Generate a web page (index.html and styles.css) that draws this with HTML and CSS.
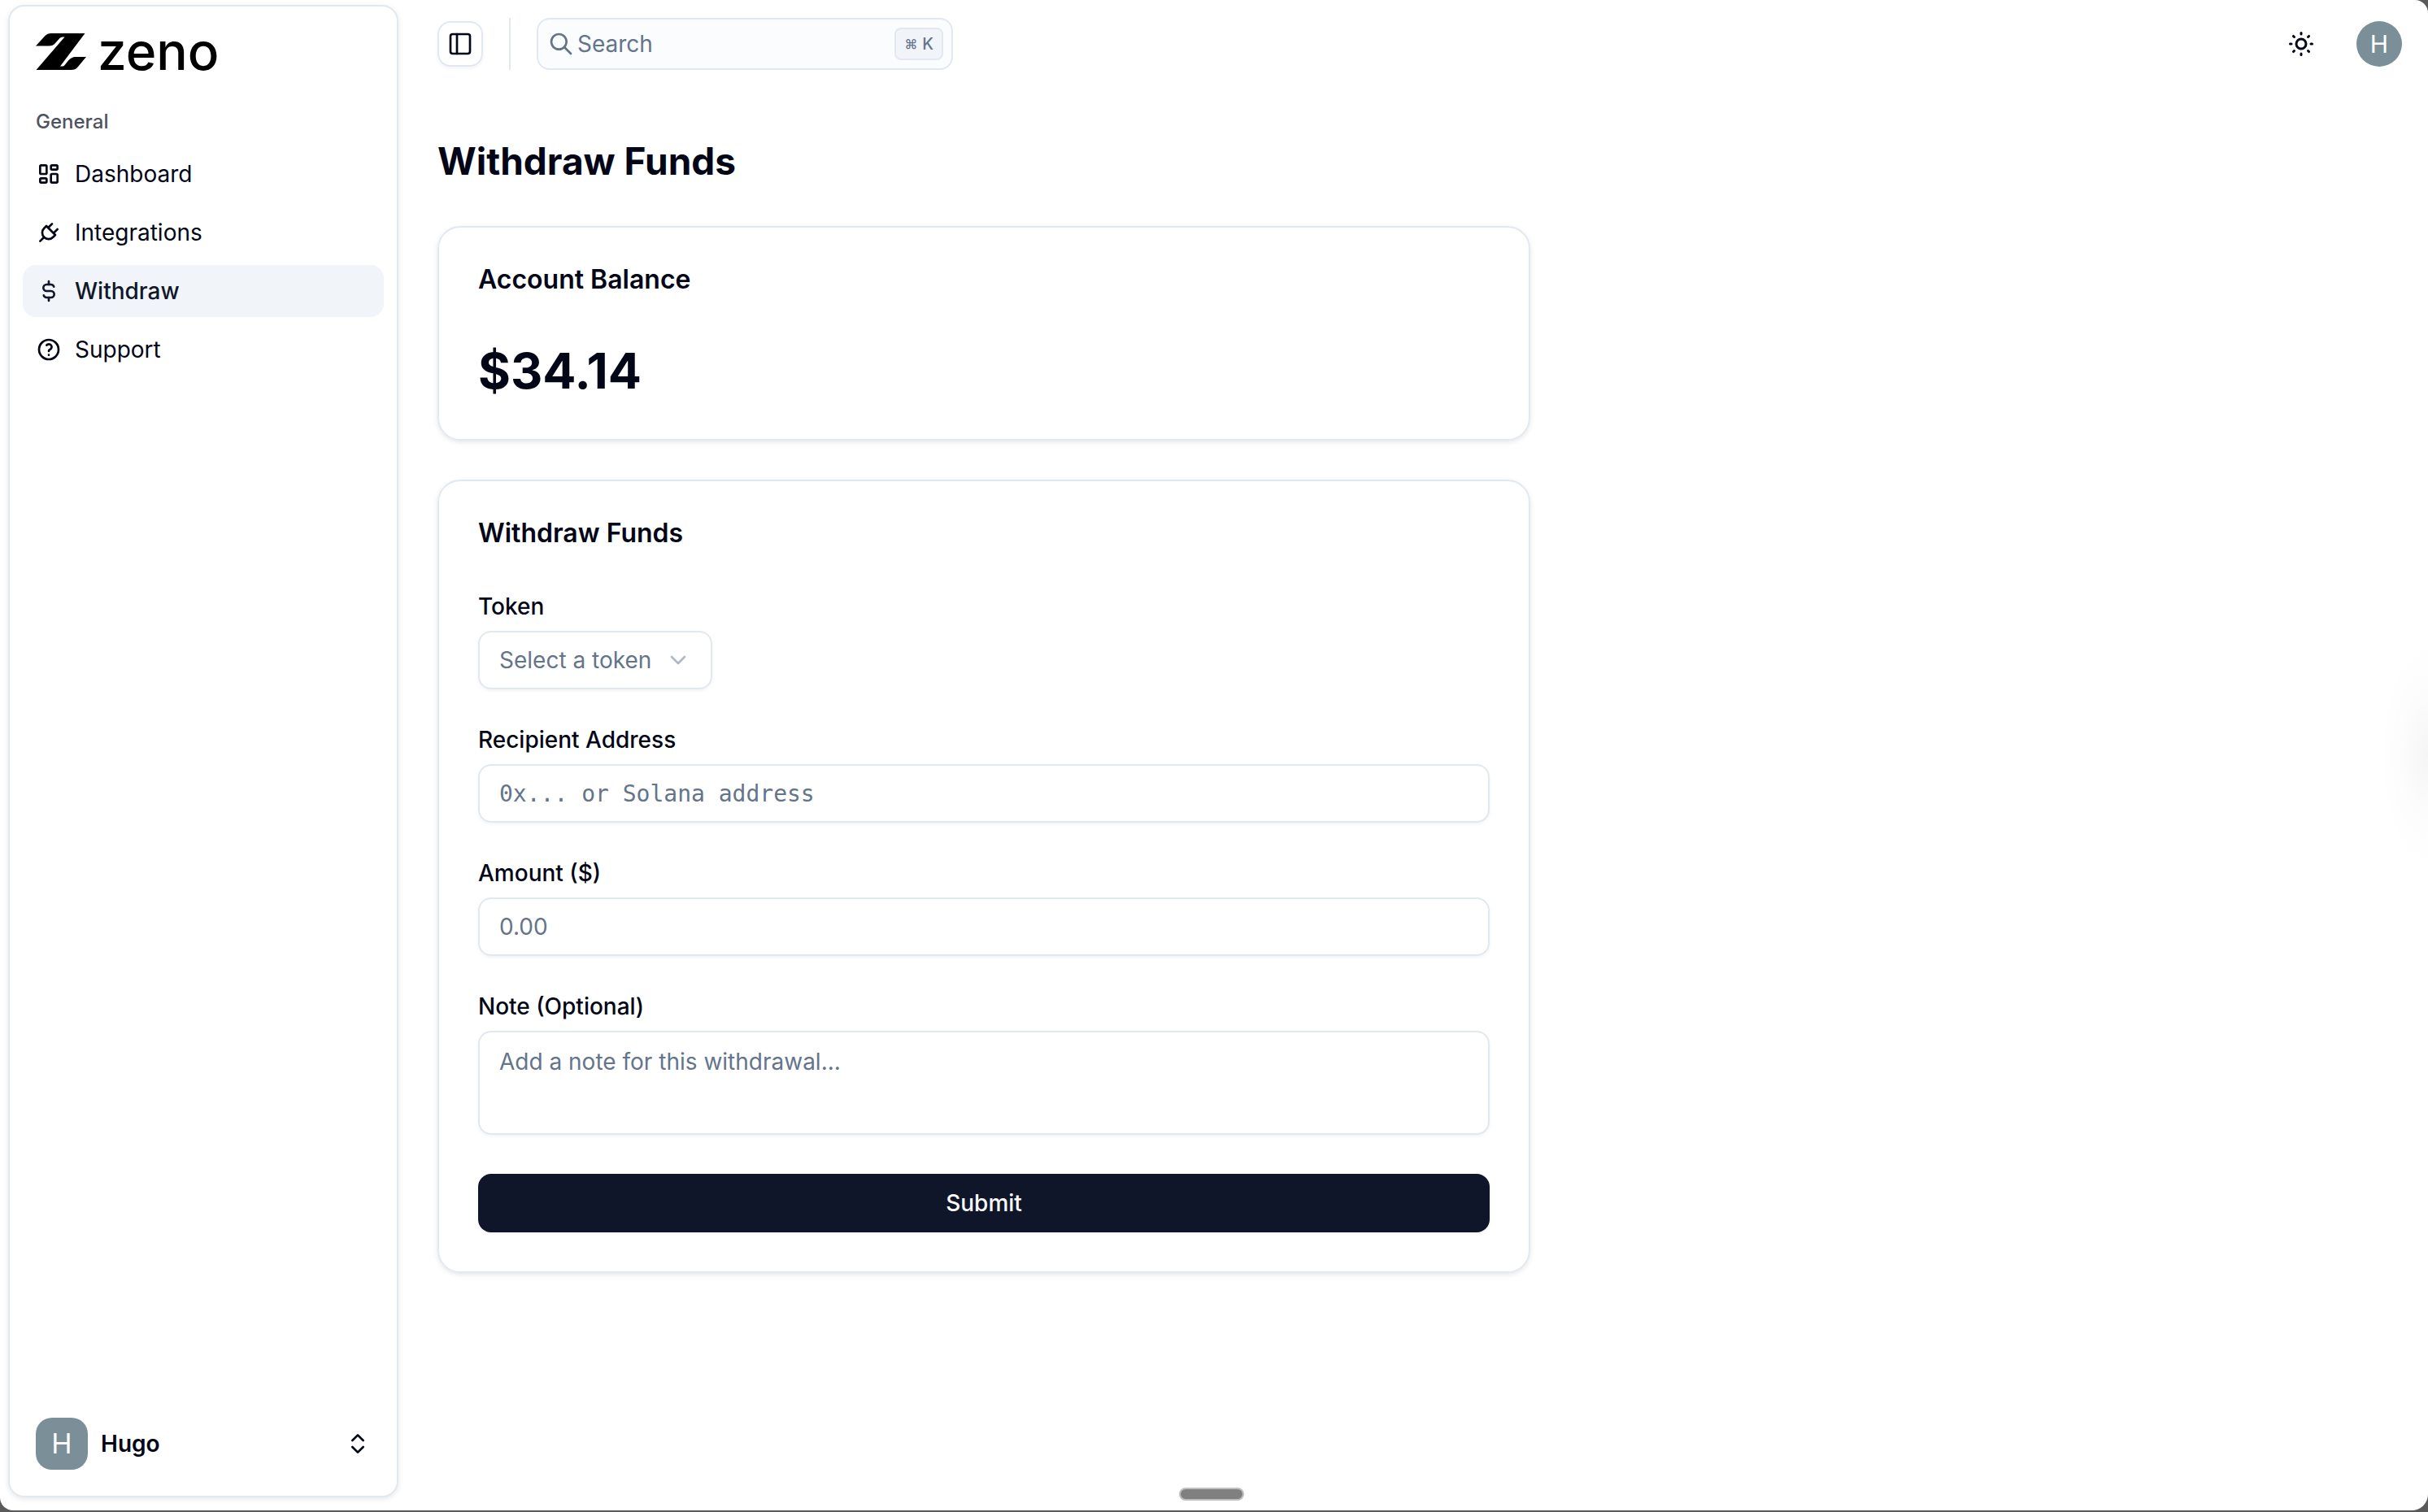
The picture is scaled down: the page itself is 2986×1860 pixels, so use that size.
FILE: index.html
```html
<!DOCTYPE html>
<html lang="en">
<head>
    <meta charset="UTF-8">
    <meta name="viewport" content="width=device-width, initial-scale=1.0">
    <title>Zeno - Withdraw Funds</title>
    <link rel="stylesheet" href="styles.css">
</head>
<body>
    <div class="app">
        <aside class="sidebar">
            <a href="#" class="logo">
                <svg class="logo-mark" viewBox="0 0 62 45" fill="currentColor" aria-hidden="true">
                    <path d="M0 15.500L11 3.500C13.500 1 15.500 0 19 0H60.500L30 40.500H32.500C34 40.500 35 40 36 38.500L40 33.500C43 30.500 45 29 49 29H62L52 41C49.500 44 47 45 43.500 45H.5L35.500 4.500H33C31 4.500 30 5.500 29 6.500L24.500 11.500C22 14.500 19.500 15.500 16 15.500Z"/>
                </svg>
                <span class="logo-name">zeno</span>
            </a>

            <nav class="nav">
                <div class="nav-label">General</div>
                <a href="#" class="nav-item">
                    <svg class="icon" viewBox="0 0 24 24" aria-hidden="true">
                        <path d="M5 4h4a1 1 0 0 1 1 1v6a1 1 0 0 1 -1 1h-4a1 1 0 0 1 -1 -1v-6a1 1 0 0 1 1 -1"/>
                        <path d="M5 16h4a1 1 0 0 1 1 1v2a1 1 0 0 1 -1 1h-4a1 1 0 0 1 -1 -1v-2a1 1 0 0 1 1 -1"/>
                        <path d="M15 12h4a1 1 0 0 1 1 1v6a1 1 0 0 1 -1 1h-4a1 1 0 0 1 -1 -1v-6a1 1 0 0 1 1 -1"/>
                        <path d="M15 4h4a1 1 0 0 1 1 1v2a1 1 0 0 1 -1 1h-4a1 1 0 0 1 -1 -1v-2a1 1 0 0 1 1 -1"/>
                    </svg>
                    Dashboard
                </a>
                <a href="#" class="nav-item">
                    <svg class="icon" viewBox="0 0 24 24" aria-hidden="true">
                        <path d="M9.785 6l8.215 8.215l-2.054 2.054a5.81 5.81 0 1 1 -8.215 -8.215l2.054 -2.054z"/>
                        <path d="M4 20l3.500 -3.500"/>
                        <path d="M15 4l-3.500 3.500"/>
                        <path d="M20 9l-3.500 3.500"/>
                    </svg>
                    Integrations
                </a>
                <a href="#" class="nav-item active">
                    <svg class="icon" viewBox="0 0 24 24" aria-hidden="true">
                        <path d="M16.700 8a3 3 0 0 0 -2.700 -2h-4a3 3 0 0 0 0 6h4a3 3 0 0 1 0 6h-4a3 3 0 0 1 -2.700 -2"/>
                        <path d="M12 3v3m0 12v3"/>
                    </svg>
                    Withdraw
                </a>
                <a href="#" class="nav-item">
                    <svg class="icon" viewBox="0 0 24 24" aria-hidden="true">
                        <circle cx="12" cy="12" r="9"/>
                        <path d="M12 17v.01"/>
                        <path d="M12 13.500a1.500 1.500 0 0 1 1 -1.500a2.600 2.600 0 1 0 -3 -4"/>
                    </svg>
                    Support
                </a>
            </nav>

            <button type="button" class="user-menu">
                <span class="avatar avatar-square">H</span>
                <span class="user-name">Hugo</span>
                <svg class="icon" viewBox="0 0 24 24" aria-hidden="true">
                    <path d="m7 15 5 5 5-5"/>
                    <path d="m7 9 5-5 5 5"/>
                </svg>
            </button>
        </aside>

        <div class="main">
            <header class="topbar">
                <button type="button" class="toggle-btn" aria-label="Toggle sidebar">
                    <svg class="icon" viewBox="0 0 24 24" aria-hidden="true">
                        <rect x="3" y="3" width="18" height="18" rx="2"/>
                        <path d="M9 3v18"/>
                    </svg>
                </button>
                <div class="separator"></div>
                <button type="button" class="search-btn">
                    <svg class="icon" viewBox="0 0 24 24" aria-hidden="true">
                        <circle cx="10" cy="10" r="7"/>
                        <path d="M21 21l-6 -6"/>
                    </svg>
                    <span class="search-text">Search</span>
                    <kbd><span class="cmd">⌘</span>K</kbd>
                </button>
                <div class="topbar-right">
                    <button type="button" class="theme-btn" aria-label="Toggle theme">
                        <svg class="icon icon-lg" viewBox="0 0 24 24" aria-hidden="true">
                            <circle cx="12" cy="12" r="4"/>
                            <path d="M12 3v1"/>
                            <path d="M12 20v1"/>
                            <path d="M3 12h1"/>
                            <path d="M20 12h1"/>
                            <path d="m18.364 5.636-.707.707"/>
                            <path d="m6.343 17.657-.707.707"/>
                            <path d="m5.636 5.636.707.707"/>
                            <path d="m17.657 17.657.707.707"/>
                        </svg>
                    </button>
                    <button type="button" class="avatar avatar-round" aria-label="Account">H</button>
                </div>
            </header>

            <main class="content">
                <h1>Withdraw Funds</h1>

                <section class="card">
                    <h2>Account Balance</h2>
                    <div class="balance">$34.14</div>
                </section>

                <section class="card">
                    <h2>Withdraw Funds</h2>
                    <form class="form">
                        <div class="field">
                            <label for="token">Token</label>
                            <div class="select-wrap">
                                <select id="token">
                                    <option>Select a token</option>
                                </select>
                                <svg class="icon chevron" viewBox="0 0 24 24" aria-hidden="true">
                                    <path d="m6 9 6 6 6-6"/>
                                </svg>
                            </div>
                        </div>
                        <div class="field">
                            <label for="recipient">Recipient Address</label>
                            <input type="text" id="recipient" class="mono" placeholder="0x... or Solana address">
                        </div>
                        <div class="field">
                            <label for="amount">Amount ($)</label>
                            <input type="text" id="amount" inputmode="decimal" placeholder="0.00">
                        </div>
                        <div class="field">
                            <label for="note">Note (Optional)</label>
                            <textarea id="note" placeholder="Add a note for this withdrawal..."></textarea>
                        </div>
                        <button type="submit" class="submit-btn">Submit</button>
                    </form>
                </section>
            </main>
        </div>

        <div class="edge-glow"></div>
        <div class="drag-handle"></div>
    </div>
</body>
</html>
```
FILE: styles.css
```css
* {
    margin: 0;
    padding: 0;
    box-sizing: border-box;
}

body {
    font-family: Inter, 'Liberation Sans', sans-serif;
    font-size: 28px;
    line-height: 40px;
    background: #5a5a5a;
    color: #020617;
}

button, input, select, textarea {
    font: inherit;
    color: inherit;
}

button {
    background: none;
    border: none;
    cursor: pointer;
}

a {
    color: inherit;
    text-decoration: none;
}

.app {
    position: relative;
    display: flex;
    min-height: calc(100vh - 2px);
    background: #ffffff;
    border-radius: 0 16px 20px 16px;
    overflow: hidden;
}

.icon {
    width: 32px;
    height: 32px;
    flex-shrink: 0;
    fill: none;
    stroke: currentColor;
    stroke-width: 2;
    stroke-linecap: round;
    stroke-linejoin: round;
}

.icon-lg {
    width: 36px;
    height: 36px;
}

/* Sidebar */
.sidebar {
    width: 480px;
    flex-shrink: 0;
    margin: 6px 0 16px 10px;
    padding: 16px;
    display: flex;
    flex-direction: column;
    border: 2px solid #e2e8f0;
    border-radius: 20px;
    box-shadow: 0 2px 6px rgba(0, 0, 0, 0.1);
}

.logo {
    display: flex;
    align-items: center;
    gap: 14px;
    height: 78px;
    padding: 0 16px;
    color: #000000;
}

.logo-mark {
    width: 62px;
    height: 45px;
}

.logo-name {
    font-size: 64px;
    font-weight: 500;
    line-height: 64px;
}

.nav {
    display: flex;
    flex-direction: column;
    gap: 8px;
}

.nav-label {
    padding: 0 16px;
    margin: 16px 0 8px;
    height: 48px;
    font-size: 24px;
    font-weight: 500;
    line-height: 64px;
    color: #4f5261;
}

.nav-item {
    display: flex;
    align-items: center;
    gap: 16px;
    height: 64px;
    padding: 0 16px;
    border-radius: 16px;
}

.nav-item.active {
    background: #f1f5f9;
    color: #0f172a;
    font-weight: 500;
}

.user-menu {
    display: flex;
    align-items: center;
    gap: 16px;
    height: 96px;
    margin-top: auto;
    padding: 0 16px;
    text-align: left;
}

.user-name {
    flex: 1;
    font-weight: 600;
}

.avatar {
    display: flex;
    align-items: center;
    justify-content: center;
    flex-shrink: 0;
    background: #7b8f98;
    color: #ffffff;
}

.avatar-square {
    width: 64px;
    height: 64px;
    border-radius: 20px;
    font-size: 34px;
}

.avatar-round {
    width: 56px;
    height: 56px;
    border-radius: 50%;
    font-size: 30px;
}

/* Top bar */
.main {
    flex: 1;
    padding: 0 32px 0 48px;
}

.topbar {
    display: flex;
    align-items: center;
    gap: 32px;
    height: 108px;
}

.toggle-btn {
    display: flex;
    align-items: center;
    justify-content: center;
    width: 56px;
    height: 56px;
    border: 2px solid #e2e8f0;
    border-radius: 16px;
    box-shadow: 0 2px 4px rgba(0, 0, 0, 0.05);
}

.separator {
    width: 2px;
    height: 64px;
    background: #e2e8f0;
}

.search-btn {
    display: flex;
    align-items: center;
    gap: 4px;
    width: 512px;
    height: 64px;
    padding: 0 10px 0 12px;
    border: 2px solid #e2e8f0;
    border-radius: 16px;
    background: #fbfcfe;
    color: #64748b;
    text-align: left;
}

.search-text {
    flex: 1;
}

kbd {
    display: flex;
    align-items: center;
    gap: 6px;
    height: 40px;
    padding: 0 10px;
    border: 2px solid #e2e8f0;
    border-radius: 8px;
    background: #f1f5f9;
    font-family: inherit;
    font-size: 20px;
    font-weight: 500;
}

.cmd {
    font-size: 16px;
}

.topbar-right {
    display: flex;
    align-items: center;
    gap: 32px;
    margin-left: auto;
}

.theme-btn {
    display: flex;
    align-items: center;
    justify-content: center;
    width: 72px;
    height: 72px;
}

/* Content */
.content {
    display: flex;
    flex-direction: column;
    gap: 48px;
    max-width: 1344px;
    padding: 58px 0 48px;
}

h1 {
    font-size: 46px;
    font-weight: 700;
    line-height: 64px;
}

.card {
    padding: 48px;
    border: 2px solid #e2e8f0;
    border-radius: 28px;
    box-shadow: 0 2px 6px rgba(0, 0, 0, 0.1);
}

h2 {
    margin-bottom: 60px;
    font-size: 32px;
    font-weight: 600;
    line-height: 32px;
}

.balance {
    font-size: 61px;
    font-weight: 700;
    line-height: 72px;
}

.form {
    display: flex;
    flex-direction: column;
    gap: 48px;
}

.field {
    display: flex;
    flex-direction: column;
    gap: 16px;
}

label {
    font-weight: 500;
    line-height: 28px;
}

input, select, textarea {
    width: 100%;
    height: 72px;
    padding: 0 24px;
    border: 2px solid #e2e8f0;
    border-radius: 16px;
    background: #ffffff;
    box-shadow: 0 2px 4px rgba(0, 0, 0, 0.05);
}

input::placeholder, textarea::placeholder {
    color: #64748b;
    opacity: 1;
}

.mono {
    font-family: 'DejaVu Sans Mono', monospace;
}

.select-wrap {
    position: relative;
    align-self: flex-start;
}

select {
    appearance: none;
    padding-right: 72px;
    color: #64748b;
}

.chevron {
    position: absolute;
    top: 20px;
    right: 26px;
    color: #64748b;
    opacity: 0.5;
    pointer-events: none;
}

textarea {
    display: block;
    height: 128px;
    padding: 16px 24px;
    resize: none;
}

.submit-btn {
    height: 72px;
    border-radius: 16px;
    background: #0f1629;
    color: #f8fafc;
    font-weight: 500;
    box-shadow: 0 2px 4px rgba(0, 0, 0, 0.05);
}

/* Overlays on the window edges */
.edge-glow {
    position: absolute;
    top: 50%;
    right: 0;
    width: 60px;
    height: 280px;
    transform: translateY(-50%);
    background: radial-gradient(ellipse 60px 140px at 100% 50%, rgba(0, 0, 0, 0.04), rgba(0, 0, 0, 0.01) 50%, transparent);
    pointer-events: none;
}

.drag-handle {
    position: absolute;
    left: 50%;
    bottom: 12px;
    width: 80px;
    height: 16px;
    margin-left: -43px;
    border: 2px solid #bfbfbf;
    border-radius: 8px;
    background: #808080;
}
```
